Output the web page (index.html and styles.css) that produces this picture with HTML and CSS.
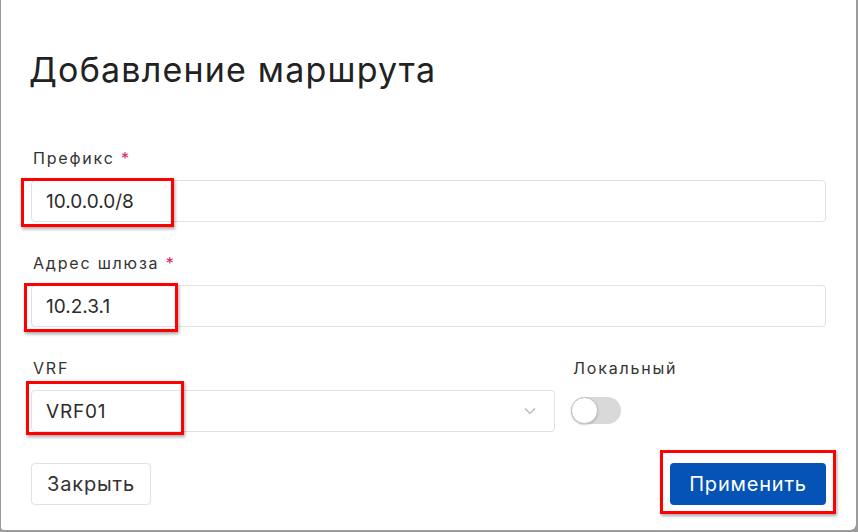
FILE: index.html
```html
<!DOCTYPE html>
<html lang="ru">
<head>
<meta charset="utf-8">
<link rel="stylesheet" href="styles.css">
</head>
<body>
<div class="modal">
  <h1 class="title">Добавление маршрута</h1>
  <div class="form">
    <div class="field">
      <label class="label">Префикс <span class="req">*</span></label>
      <div class="input">10.0.0.0/8</div>
    </div>
    <div class="field">
      <label class="label">Адрес шлюза <span class="req">*</span></label>
      <div class="input">10.2.3.1</div>
    </div>
    <div class="row">
      <div class="field">
        <label class="label">VRF</label>
        <div class="input select">
          <span>VRF01</span>
          <svg class="chev" width="12" height="8" viewBox="0 0 12 8"><path d="M1 1.5 L6 6.5 L11 1.5" fill="none" stroke="#b5b5b5" stroke-width="1.2"/></svg>
        </div>
      </div>
      <div class="field">
        <label class="label">Локальный</label>
        <div class="toggle"><span class="knob"></span></div>
      </div>
    </div>
  </div>
  <div class="footer">
    <button class="btn btn-close">Закрыть</button>
    <button class="btn btn-apply">Применить</button>
  </div>
  <div class="mark m1"></div>
  <div class="mark m2"></div>
  <div class="mark m3"></div>
  <div class="mark m4"></div>
</div>
</body>
</html>
```
FILE: styles.css
```css
* { box-sizing: border-box; }
html, body { margin: 0; padding: 0; }
body {
  background: #9c9c9c;
  width: 858px;
  height: 532px;
  overflow: hidden;
  font-family: Inter, "Noto Sans", sans-serif;
  color: #2b2b2b;
}
.modal {
  position: relative;
  margin-left: 1px;
  width: 855px;
  height: 530px;
  background: #fff;
  border-bottom-right-radius: 6px;
  border-bottom-left-radius: 3px;
  padding: 0 30px 0 30px;
}
.title {
  margin: 0 0 0 -2px;
  padding-top: 50px;
  font-size: 34px;
  line-height: 40px;
  font-weight: 400;
  letter-spacing: 1.2px;
  color: #222;
}
.form {
  margin-top: 58px;
  display: flex;
  flex-direction: column;
  gap: 31px;
}
.field { display: flex; flex-direction: column; gap: 12px; }
.label {
  font-size: 16px;
  line-height: 20px;
  letter-spacing: 1.8px;
  color: #333;
  padding-left: 2px;
}
.req { color: #e0245e; letter-spacing: 0; }
.input {
  height: 42px;
  border: 1px solid #e1e1e4;
  border-radius: 4px;
  padding: 0 14px;
  display: flex;
  align-items: center;
  font-size: 19px;
  color: #2b2b2b;
}
.row {
  display: grid;
  grid-template-columns: 524px 1fr;
  column-gap: 16px;
}
.select { justify-content: space-between; padding-right: 18px; letter-spacing: 0.8px; }
.toggle {
  margin-top: 7px;
  width: 50px;
  height: 27px;
  border-radius: 14px;
  background: #d9d9d9;
  position: relative;
}
.knob {
  position: absolute;
  left: 0;
  top: 0;
  width: 27px;
  height: 27px;
  border-radius: 50%;
  background: #fff;
  border: 1px solid #c4c4c4;
  box-shadow: 0 1px 2px rgba(0,0,0,0.2);
}
.footer {
  margin-top: 31px;
  display: flex;
  justify-content: space-between;
}
.btn {
  height: 42px;
  border-radius: 4px;
  font-family: inherit;
  font-size: 20px;
  letter-spacing: 0.8px;
  padding: 0;
}
.btn-close {
  width: 120px;
  background: #fff;
  border: 1px solid #e1e1e4;
  color: #333;
}
.btn-apply {
  width: 156px;
  background: #0553b4;
  border: none;
  color: #fff;
}
.mark {
  position: absolute;
  border: 3px solid #ff0000;
  box-shadow: 1px 2px 3px rgba(0,0,0,0.35);
}
.m1 { left: 20px; top: 178px; width: 153px; height: 49px; }
.m2 { left: 23px; top: 283px; width: 154px; height: 49px; }
.m3 { left: 25px; top: 381px; width: 158px; height: 54px; }
.m4 { left: 659px; top: 450px; width: 176px; height: 64px; }
```
